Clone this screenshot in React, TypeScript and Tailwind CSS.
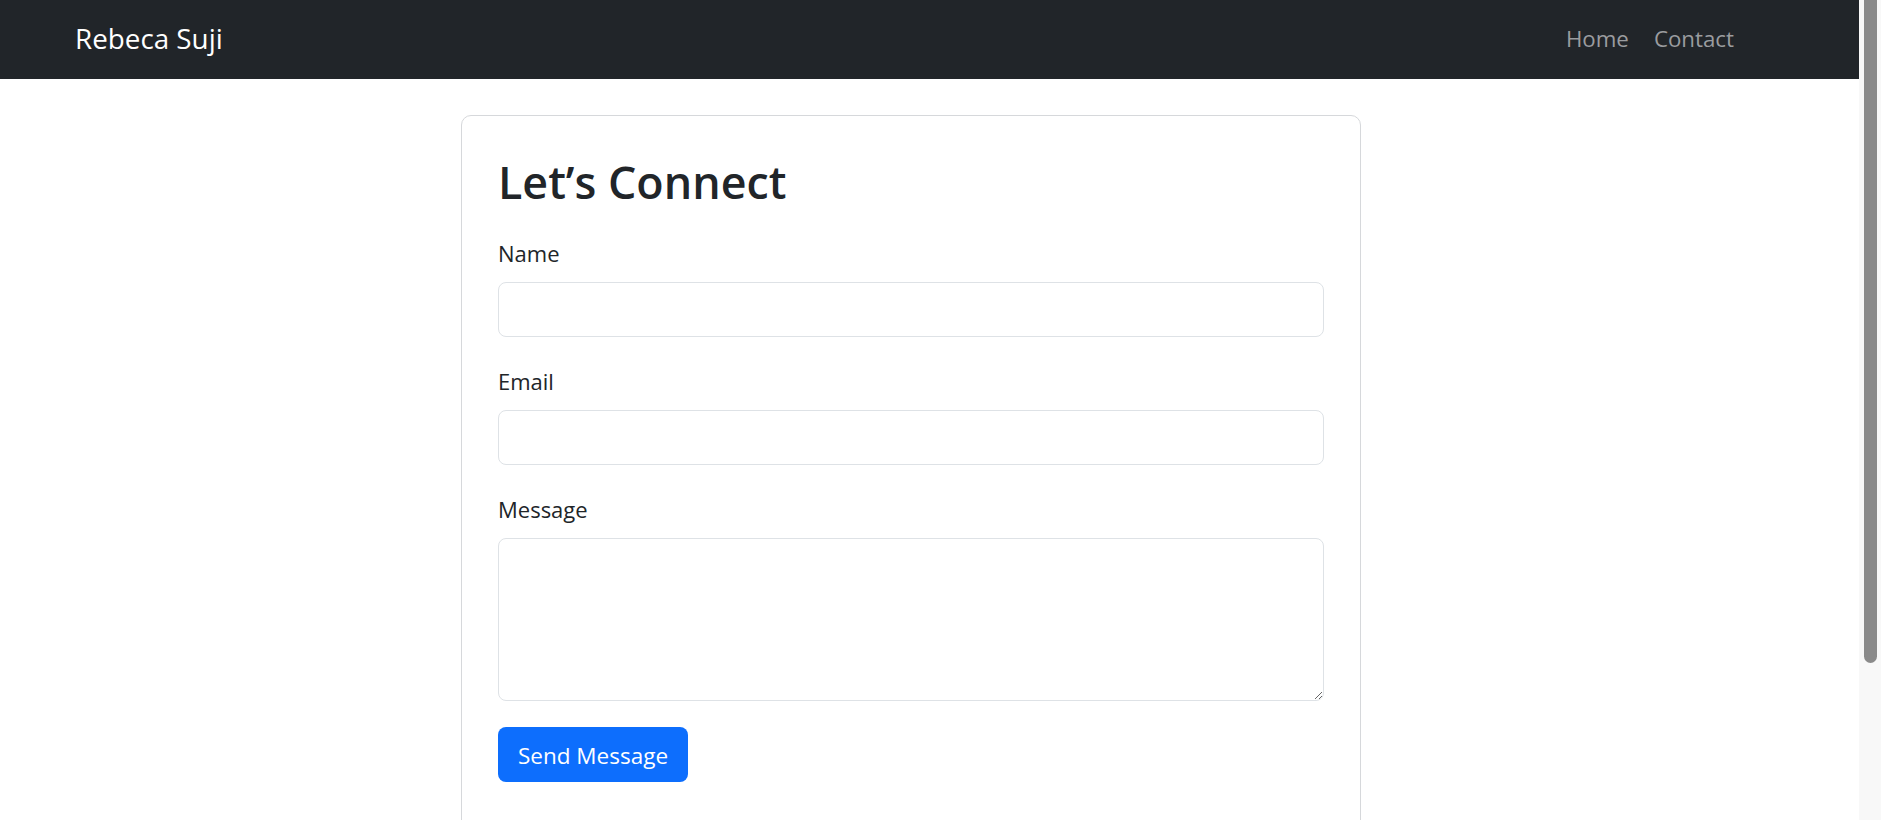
const font = { fontFamily: '"Open Sans", "Noto Sans", sans-serif' };

function Field({ label }: { label: string }) {
  return (
    <div className="mb-[28px] flex flex-col">
      <label className="mb-[12px] text-[22px] leading-[33px] text-[#212529]">{label}</label>
      <input className="h-[55px] w-full rounded-[8px] border border-[#dee2e6] bg-white px-3 text-[22px] outline-none" />
    </div>
  );
}

export default function App() {
  return (
    <div className="flex h-[820px] overflow-hidden bg-white" style={font}>
      <div className="flex min-w-0 flex-1 flex-col">
        <nav className="flex h-[79px] shrink-0 items-center bg-[#212529] pl-[75px] pr-[125px]">
          <span className="pb-[2px] text-[27.8px] text-white">Rebeca Suji</span>
          <div className="ml-auto flex gap-[25px] pb-[2px] text-[22.3px] text-[#9a9c9f]">
            <a>Home</a>
            <a>Contact</a>
          </div>
        </nav>

        <main className="pl-[461px] pt-[36px]">
          <div className="w-[900px] rounded-[10px] border border-[#d6d8db] px-[36px] pb-[60px] pt-[38px]">
            <h1 className="mb-[28px] text-[44.8px] font-semibold leading-[55px] text-[#212529]">
              Let’s Connect
            </h1>
            <Field label="Name" />
            <Field label="Email" />
            <div className="flex flex-col">
              <label className="mb-[12px] text-[22px] leading-[33px] text-[#212529]">Message</label>
              <textarea className="h-[163px] w-full rounded-[8px] border border-[#dee2e6] bg-white px-3 py-2 text-[22px] outline-none" />
            </div>
            <button className="mt-[26px] h-[55px] w-[190px] rounded-[8px] bg-[#0d6efd] pt-[2px] text-[22.5px] text-white">
              Send Message
            </button>
          </div>
        </main>
      </div>

      {/* page scrollbar */}
      <div className="flex w-[22px] shrink-0 justify-center bg-[#f8f8f8]">
        <div className="h-[663px] w-[13px] rounded-b-full bg-[#8a8a8a]" />
      </div>
    </div>
  );
}
